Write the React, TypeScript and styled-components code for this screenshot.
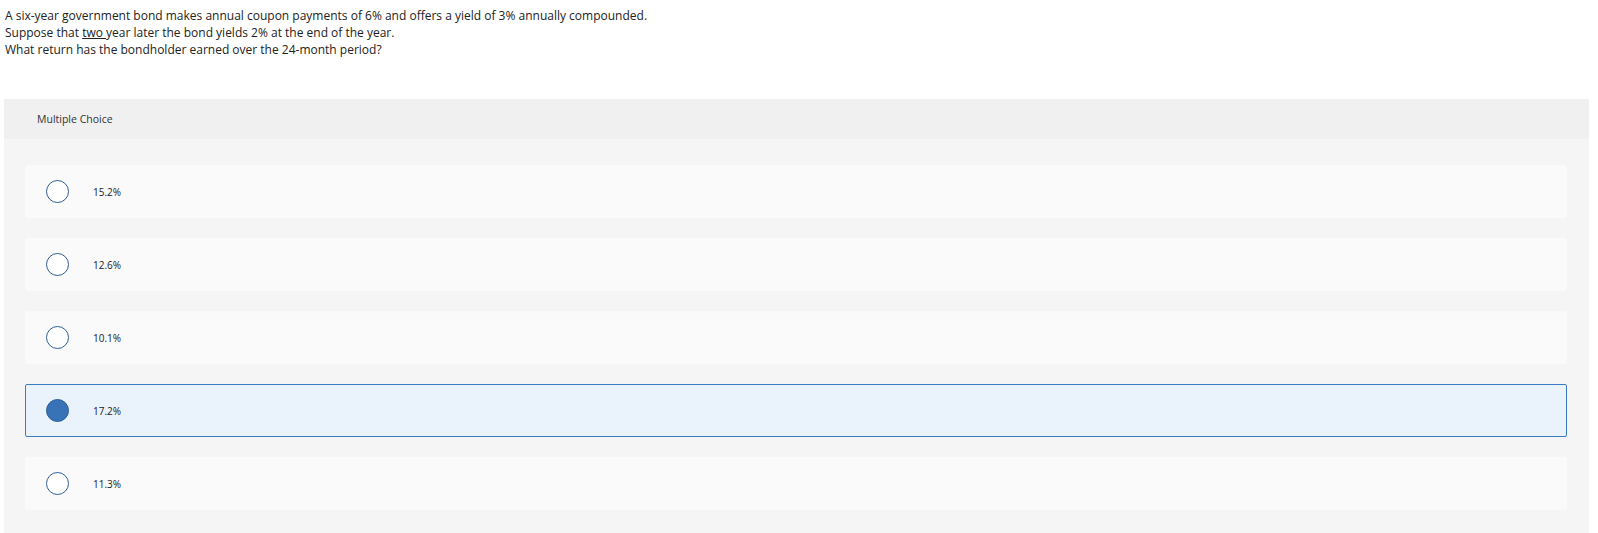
import React from "react";
import styled, { createGlobalStyle } from "styled-components";

const Global = createGlobalStyle`
  html, body { margin: 0; padding: 0; background: #ffffff; }
  body { font-family: "Open Sans", "Liberation Sans", Arial, sans-serif; color: #222; }
`;

const Page = styled.div`
  width: 1598px;
  height: 533px;
  overflow: hidden;
`;

const Question = styled.div`
  padding: 7px 0 0 5px;
  font-size: 12px;
  line-height: 17px;
  color: #222;
  height: 99px;
  box-sizing: border-box;
`;

const Line = styled.div``;

const U = styled.span`
  text-decoration: underline;
`;

const Panel = styled.div`
  margin-left: 4px;
  width: 1585px;
  background: #f5f5f5;
  height: 434px;
`;

const PanelHeader = styled.div`
  height: 40px;
  background: #f0f0f0;
  display: flex;
  align-items: center;
  padding-left: 33px;
  font-size: 10.5px;
  color: #333;
`;

const List = styled.div`
  display: flex;
  flex-direction: column;
  gap: 20px;
  padding: 26px 22px 0 21px;
`;

const Card = styled.div<{ $selected?: boolean }>`
  height: 53px;
  box-sizing: border-box;
  display: flex;
  align-items: center;
  padding-left: 20px;
  border-radius: 2px;
  background: ${(p) => (p.$selected ? "#eaf2fb" : "#fafafa")};
  border: 1px solid ${(p) => (p.$selected ? "#3a7bc8" : "#fafafa")};
`;

const Radio = styled.span<{ $selected?: boolean }>`
  width: 23px;
  height: 23px;
  box-sizing: border-box;
  border-radius: 50%;
  border: 1.5px solid #2f5f95;
  background: ${(p) => (p.$selected ? "#3873b8" : "#ffffff")};
  flex: none;
`;

const Label = styled.span`
  margin-left: 24px;
  font-size: 10px;
  color: #222;
`;

const options = ["15.2%", "12.6%", "10.1%", "17.2%", "11.3%"];
const selectedIndex = 3;

export default function App() {
  return (
    <Page>
      <Global />
      <Question>
        <Line>
          A six-year government bond makes annual coupon payments of 6% and offers a yield of 3% annually compounded.
        </Line>
        <Line>
          Suppose that <U>two </U>year later the bond yields 2% at the end of the year.
        </Line>
        <Line>What return has the bondholder earned over the 24-month period?</Line>
      </Question>
      <Panel>
        <PanelHeader>Multiple Choice</PanelHeader>
        <List>
          {options.map((o, i) => (
            <Card key={o} $selected={i === selectedIndex}>
              <Radio $selected={i === selectedIndex} />
              <Label>{o}</Label>
            </Card>
          ))}
        </List>
      </Panel>
    </Page>
  );
}
